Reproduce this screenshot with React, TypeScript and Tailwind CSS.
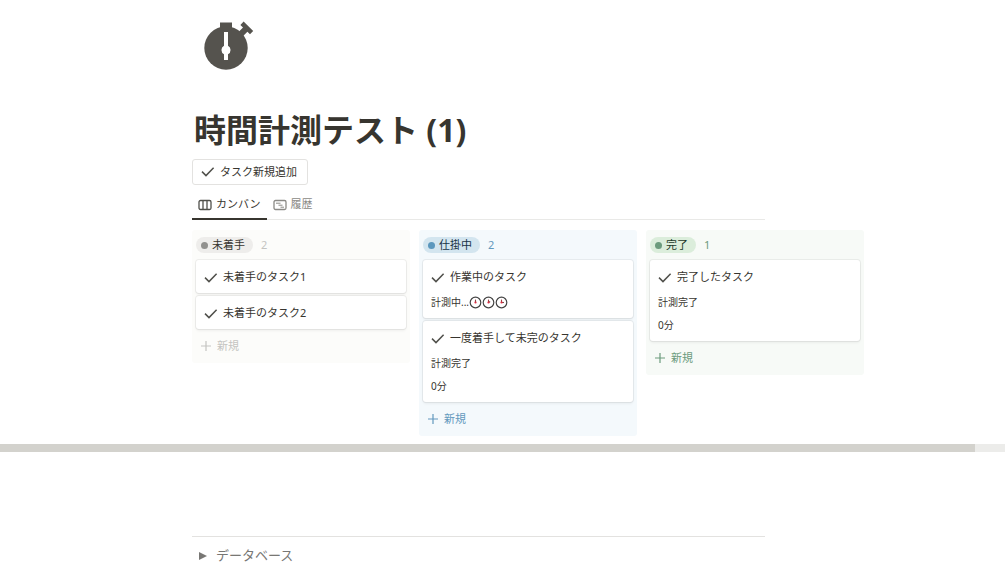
import type { ReactNode } from "react";

interface Task {
  id: number;
  title: string;
  props?: ReactNode[];
}

interface ColumnProps {
  name: string;
  tasks: Task[];
  bg: string;
  badge: string;
  dot: string;
  accent: string;
}

const CheckIcon = () => (
  <svg viewBox="0 0 14 14" className="size-[14px] shrink-0" fill="none" stroke="#50504b" strokeWidth="1.5" aria-hidden="true">
    <path d="M1 6.600 5 10.600 12.600 2.800" />
  </svg>
);

const PlusIcon = () => (
  <svg viewBox="0 0 10 10" className="size-[10px] shrink-0" fill="none" stroke="currentColor" strokeWidth="1.2" aria-hidden="true">
    <path d="M5 0v10M0 5h10" />
  </svg>
);

const ClockIcon = ({ hand }: { hand: string }) => (
  <svg viewBox="0 0 13 13" className="size-[13px]" fill="none" aria-hidden="true">
    <circle cx="6.5" cy="6.5" r="5.3" stroke="#454545" strokeWidth="1.2" />
    <path d="M6.500 3.600v3" stroke="#a04040" strokeWidth="1.1" />
    <path d={hand} stroke="#7a4a4a" strokeWidth="1.1" />
    <circle cx="6.5" cy="6.5" r="1.1" fill="#dd2e44" />
  </svg>
);

const StopwatchIcon = () => (
  <svg viewBox="0 0 52 52" className="size-[52px]" aria-hidden="true">
    <g fill="#55534e">
      <circle cx="24" cy="28" r="21.7" />
      <rect x="18" y="2.500" width="12" height="8" />
      <path d="M35.800 12.800 41 7.600 38.400 5 41.600 1.600 51.200 11.100 48 14.300 45.400 11.800 40.200 17z" />
    </g>
    <path d="M22 12h4v13.700a4.900 4.900 0 0 1 0 8.600V40h-4v-5.700a4.900 4.900 0 0 1 0-8.600z" fill="#fff" />
  </svg>
);

const TaskCard = ({ title, props = [] }: Task) => (
  <article className={`rounded-[3px] bg-white px-2 shadow-[0_0_0_1px_rgba(15,15,15,0.06),0_2px_3px_rgba(15,15,15,0.05)] ${props.length > 0 ? "pb-[6px]" : ""}`}>
    <h3 className="flex h-[33px] items-center gap-[5px] pt-[2px] text-[11px]">
      <CheckIcon />
      {title}
    </h3>
    {props.length > 0 && (
      <div className="flex flex-col gap-1 text-[10px]">
        {props.map((prop, i) => (
          <div key={i} className="flex h-[19px] items-center">{prop}</div>
        ))}
      </div>
    )}
  </article>
);

const Column = ({ name, tasks, bg, badge, dot, accent }: ColumnProps) => (
  <section className={`w-[218px] shrink-0 rounded-[3px] px-1 ${bg}`}>
    <header className="flex h-[30px] items-center gap-2 text-[11px]">
      <h2 className={`flex h-4 items-center gap-1 rounded-full pl-[5px] pr-2 ${badge}`}>
        <span className={`size-[7px] rounded-full ${dot}`} />
        {name}
      </h2>
      <span className={accent}>{tasks.length}</span>
    </header>
    <div className="flex flex-col gap-[3px]">
      {tasks.map((task) => (
        <TaskCard key={task.id} {...task} />
      ))}
    </div>
    <button className={`flex h-[34px] w-full items-center gap-[6px] px-[5px] text-[11px] ${accent}`}>
      <PlusIcon />
      新規
    </button>
  </section>
);

const columns: ColumnProps[] = [
  {
    name: "未着手",
    bg: "bg-[#fcfcfa]",
    badge: "bg-[#eeedeb]",
    dot: "bg-[#91918e]",
    accent: "text-[#c4c4c1]",
    tasks: [
      { id: 1, title: "未着手のタスク1" },
      { id: 2, title: "未着手のタスク2" },
    ],
  },
  {
    name: "仕掛中",
    bg: "bg-[#f4f9fc]",
    badge: "bg-[#d3e5ef] text-[#183347]",
    dot: "bg-[#5b97bd]",
    accent: "text-[#6298bd]",
    tasks: [
      {
        id: 3,
        title: "作業中のタスク",
        props: [
          <>
            計測中...
            <ClockIcon hand="M6.500 6.500V4.500" />
            <ClockIcon hand="M6.500 6.500 8.200 5.500" />
            <ClockIcon hand="M6.500 6.500H9" />
          </>,
        ],
      },
      { id: 4, title: "一度着手して未完のタスク", props: ["計測完了", "0分"] },
    ],
  },
  {
    name: "完了",
    bg: "bg-[#f7faf7]",
    badge: "bg-[#dbeddb] text-[#1c3829]",
    dot: "bg-[#6c9b7d]",
    accent: "text-[#6c9b7d]",
    tasks: [{ id: 5, title: "完了したタスク", props: ["計測完了", "0分"] }],
  },
];

export default function App() {
  return (
    <main className="min-h-screen overflow-x-hidden bg-white font-['Noto_Sans','Noto_Sans_CJK_JP',sans-serif] text-[#37352f]">
      <div className="pl-48 pr-60 pt-5">
        <div className="pl-[10px]">
          <StopwatchIcon />
        </div>
        <h1 className="mt-9 pl-[2px] text-[32px] font-bold leading-[44px]">時間計測テスト (1)</h1>
        <button className="mt-[7px] flex h-[26px] items-center gap-[5px] rounded-[3px] border border-[#e3e2e0] px-2 pr-[10px] text-[11px]">
          <CheckIcon />
          タスク新規追加
        </button>
        <nav className="mt-[3px] flex h-8 border-b border-[#e9e9e7] text-[11px]">
          <a href="#kanban" className="-mb-px flex items-center gap-1 border-b-2 border-[#37352f] px-[6px] pt-[3px]">
            <svg viewBox="0 0 14 12" className="h-3 w-[14px]" fill="none" stroke="#50504b" strokeWidth="1.3" aria-hidden="true">
              <rect x="1" y="1.500" width="12" height="9" rx="1.500" />
              <path d="M5 1.500v9M9 1.500v9" />
            </svg>
            カンバン
          </a>
          <a href="#history" className="flex items-center gap-1 px-[6px] pt-[2px] text-[#8b8a86]">
            <svg viewBox="0 0 14 12" className="h-3 w-[14px]" fill="none" stroke="currentColor" strokeWidth="1.3" aria-hidden="true">
              <rect x="1" y="1.500" width="12" height="9" rx="1.500" />
              <path d="M3 4.200h4.500M5.500 6.200h4M7.500 8.200h3.500" strokeWidth="1" />
            </svg>
            履歴
          </a>
        </nav>
      </div>

      {/* Board */}
      <div className="mt-[10px] flex items-start gap-[9px] overflow-hidden pl-48">
        {columns.map((column) => (
          <Column key={column.name} {...column} />
        ))}
      </div>

      {/* Scroll track */}
      <div className="mt-2 h-2 bg-[#ececea]">
        <div className="h-full w-[97%] bg-[#d3d2cd]" />
      </div>

      <div className="pl-48 pr-60 pt-[84px]">
        <hr className="border-[#e3e2e0]" />
        <button className="mt-[7px] flex h-6 items-center gap-[9px] pl-[7px] text-[13px] text-[#787774]">
          <svg viewBox="0 0 8 8" className="size-2" fill="currentColor" aria-hidden="true">
            <path d="M0 0 8 4 0 8z" />
          </svg>
          データベース
        </button>
      </div>
    </main>
  );
}
